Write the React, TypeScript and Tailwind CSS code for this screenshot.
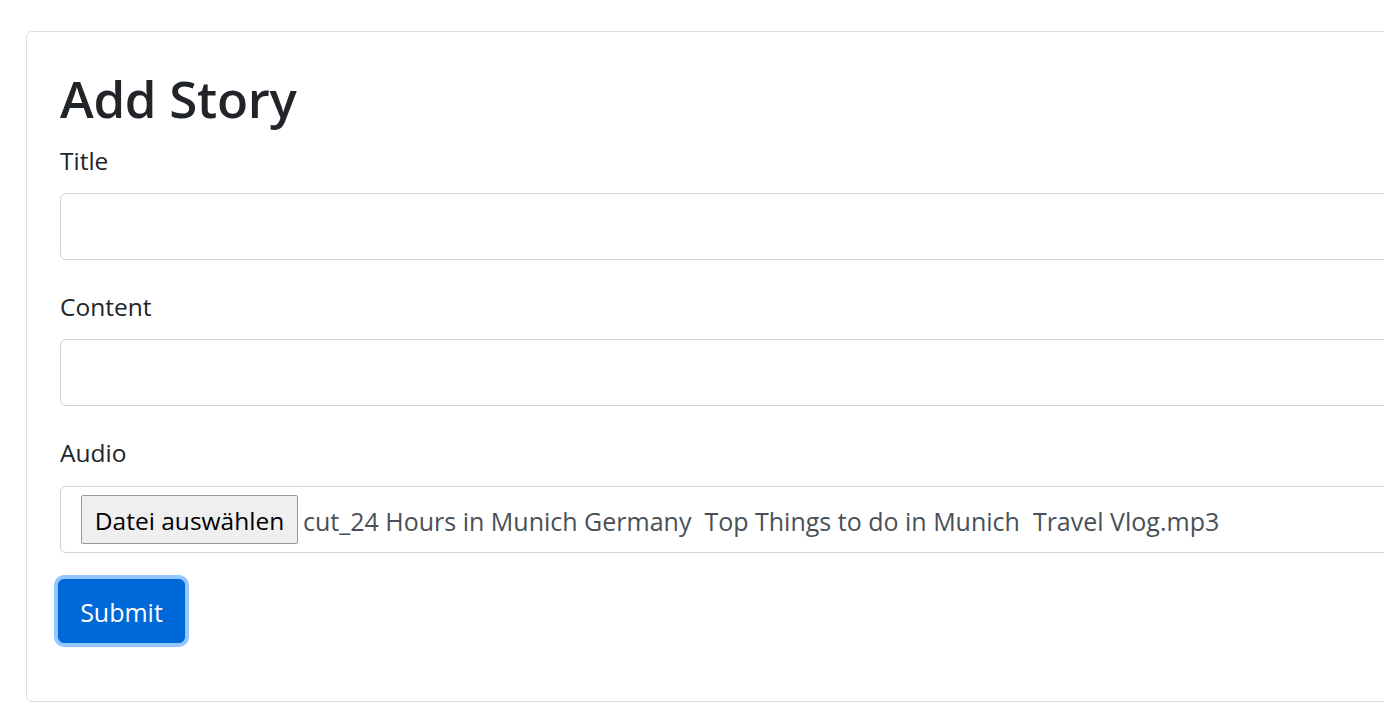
import React from "react";

export default function App() {
  const font = { fontFamily: '"Open Sans", "Noto Sans", Arial, sans-serif' };
  return (
    <div className="w-[1384px] h-[725px] overflow-hidden bg-white pt-[31px] pl-[26px] text-[#212529]" style={font}>
      <div className="w-[1420px] h-[671px] border border-[#dedede] rounded-[6px] px-[33px] pt-[33px]">
        <h1 className="text-[51px] leading-[65px] font-semibold mb-[12px] tracking-[-0.3px] pt-[1px]">Add Story</h1>
        <label className="block text-[24.5px] leading-[36px] mb-[14px] pt-[1px] -mt-[1px]">Title</label>
        <div className="h-[67px] w-full border-[1.5px] border-[#d0d4d8] rounded-[6px] bg-white mb-[29px]"></div>
        <label className="block text-[24.5px] leading-[36px] mb-[14px] pt-[1px] -mt-[1px]">Content</label>
        <div className="h-[67px] w-full border-[1.5px] border-[#d0d4d8] rounded-[6px] bg-white mb-[29px]"></div>
        <label className="block text-[24.5px] leading-[36px] mb-[15px] pt-[1px] -mt-[1px]">Audio</label>
        <div className="h-[67px] w-full border-[1.5px] border-[#d0d4d8] rounded-[6px] bg-white flex items-center pl-[20px] mb-[26px]">
          <div className="h-[49px] w-[217px] border border-[#9a9a9a] bg-[#efefef] rounded-[2px] flex items-center justify-center text-[24.5px] text-black pt-[4px]">
            Datei auswählen
          </div>
          <span className="ml-[5px] text-[25px] text-[#495057] whitespace-pre pt-[5px]">cut_24 Hours in Munich Germany  Top Things to do in Munich  Travel Vlog.mp3</span>
        </div>
        <div className="-ml-[2px]">
          <button className="h-[64px] w-[127px] bg-[#0069d9] border border-[#0062cc] rounded-[6px] text-white text-[25px] pt-[3px] shadow-[0_0_0_4px_rgba(38,143,255,0.5)]">
            Submit
          </button>
        </div>
      </div>
    </div>
  );
}
